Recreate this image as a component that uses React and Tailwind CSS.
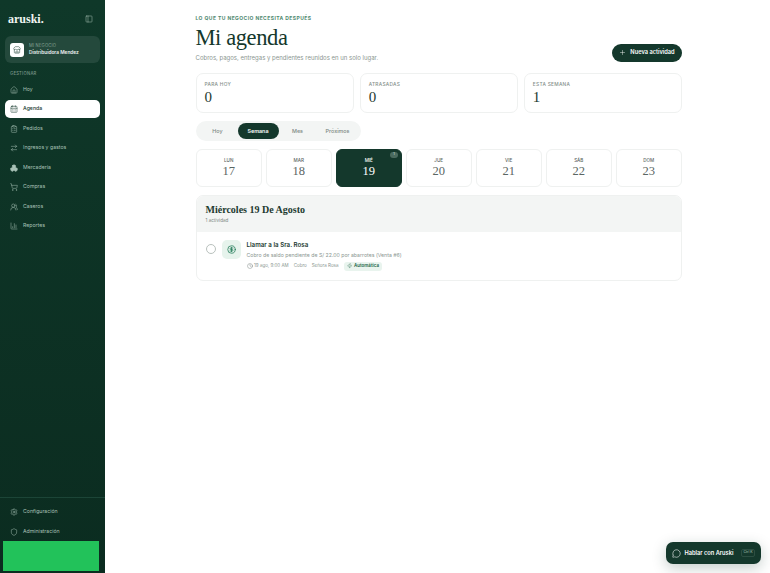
import { CalendarDays, ClipboardList, ArrowRightLeft, ShoppingCart, UsersRound, ChartColumn, Settings, Shield, PanelLeft, Plus, CircleDollarSign, Clock, MessageCircle, House, Store, Boxes, Zap } from "lucide-react";

const serif = "font-['Liberation_Serif',serif]";

const navItems = [
  { label: "Hoy", icon: House },
  { label: "Agenda", icon: CalendarDays, active: true },
  { label: "Pedidos", icon: ClipboardList },
  { label: "Ingresos y gastos", icon: ArrowRightLeft },
  { label: "Mercadería", icon: Boxes, filled: true },
  { label: "Compras", icon: ShoppingCart },
  { label: "Caseros", icon: UsersRound },
  { label: "Reportes", icon: ChartColumn },
];

const stats = [
  { label: "PARA HOY", value: "0" },
  { label: "ATRASADAS", value: "0" },
  { label: "ESTA SEMANA", value: "1" },
];

const days = [
  { name: "LUN", num: "17" },
  { name: "MAR", num: "18" },
  { name: "MIÉ", num: "19", active: true },
  { name: "JUE", num: "20" },
  { name: "VIE", num: "21" },
  { name: "SÁB", num: "22" },
  { name: "DOM", num: "23" },
];

function NavRow({ item }) {
  const Icon = item.icon;
  return (
    <div className={`flex h-[18.5px] items-center gap-[5.5px] rounded-[5px] pl-[4.5px] text-[5.2px] ${item.active ? "bg-white font-medium text-[#14382c]" : "font-normal text-[#a9c2b7]"}`}>
      <Icon className="h-[8px] w-[8px]" strokeWidth={1.5} fill={item.filled ? "currentColor" : "none"} />
      <span>{item.label}</span>
    </div>
  );
}

function Sidebar() {
  return (
    <aside className="flex h-[573px] w-[105px] shrink-0 flex-col bg-gradient-to-b from-[#0f3829] to-[#0b2c20] pb-[2px]">
      <div className="flex h-[36px] items-center justify-between pl-[8px] pr-[12px] pt-[1px]">
        <span className={`${serif} text-[12px] font-bold leading-none text-[#f1f5f2]`}>aruski.</span>
        <PanelLeft className="h-[8px] w-[8px] text-[#a9c2b7]" strokeWidth={1.5} />
      </div>
      <div className="mx-[5px] flex h-[27px] items-center gap-[5px] rounded-[6px] bg-[#24493c] px-[5px]">
        <div className="flex h-[14px] w-[14px] items-center justify-center rounded-[3px] bg-white">
          <Store className="h-[8px] w-[8px] text-[#14382c]" strokeWidth={1.5} />
        </div>
        <div className="flex flex-col leading-none">
          <span className="text-[4.2px] tracking-[0.04em] text-[#86a396]">MI NEGOCIO</span>
          <span className="mt-[2px] text-[4.8px] font-semibold text-[#eef3f0]">Distribuidora Mendez</span>
        </div>
      </div>
      <div className="mb-[3.5px] ml-[10px] mt-[7.5px] text-[4.2px] font-medium tracking-[0.06em] text-[#7b978b]">GESTIONAR</div>
      <nav className="flex flex-col gap-[1px] px-[5px]">
        {navItems.map((item) => (
          <NavRow key={item.label} item={item} />
        ))}
      </nav>
      <div className="mt-auto border-t border-[#1c4537] px-[5px] pt-[4.5px]">
        <NavRow item={{ label: "Configuración", icon: Settings }} />
        <div className="mt-[1.5px]">
          <NavRow item={{ label: "Administración", icon: Shield }} />
        </div>
      </div>
      <div className="ml-[3px] h-[30px] w-[96px] bg-[#22c25a]" />
    </aside>
  );
}

function Main() {
  return (
    <main className="flex-1 bg-white pl-[90.5px] pt-[15px]">
      <div className="w-[486.5px]">
        <div className="flex items-end justify-between">
          <div>
            <div className="text-[5px] font-bold leading-[7px] tracking-[0.085em] text-[#4f8a70]">LO QUE TU NEGOCIO NECESITA DESPUÉS</div>
            <h1 className={`${serif} mt-[2px] text-[22.5px] font-normal leading-[28px] tracking-[-0.4px] text-[#14382c]`}>Mi agenda</h1>
            <p className="mt-[1px] text-[6px] leading-[10px] text-[#8b9691]">Cobros, pagos, entregas y pendientes reunidos en un solo lugar.</p>
          </div>
          <button className="mb-[1.5px] flex h-[18px] w-[70px] items-center justify-center gap-[4px] rounded-full bg-[#14382c] text-[5.7px] font-semibold text-white">
            <Plus className="h-[7px] w-[7px]" strokeWidth={1.5} />
            Nueva actividad
          </button>
        </div>

        <div className="mt-[10px] grid grid-cols-3 gap-[6px]">
          {stats.map((s) => (
            <div key={s.label} className="h-[40px] rounded-[7px] border border-[#eff1f0] px-[8px] pt-[7px]">
              <div className="text-[4.8px] font-medium leading-[6px] tracking-[0.06em] text-[#858f8b]">{s.label}</div>
              <div className={`${serif} mt-[2px] text-[15px] leading-[17px] text-[#1d3a30]`}>{s.value}</div>
            </div>
          ))}
        </div>

        <div className="mt-[8px] flex h-[20px] w-[165px] items-center rounded-full bg-[#f3f5f4] pl-[2px] text-[5.4px] font-medium text-[#7c8783]">
          <span className="w-[40px] text-center">Hoy</span>
          <span className="flex h-[15.5px] w-[41px] items-center justify-center rounded-full bg-[#14382c] font-semibold text-white">Semana</span>
          <span className="w-[38px] text-center">Mes</span>
          <span className="w-[42px] text-center">Próximos</span>
        </div>

        <div className="mt-[8px] grid grid-cols-7 gap-[3.5px]">
          {days.map((d) => (
            <div key={d.name} className={`relative flex h-[38px] flex-col items-center justify-center rounded-[6px] border ${d.active ? "border-[#14382c] bg-[#14382c] text-white" : "border-[#eff1f0] text-[#5b6663]"}`}>
              <span className="text-[4.6px] font-medium leading-[6px]">{d.name}</span>
              <span className={`${serif} text-[12.5px] leading-[14px]`}>{d.num}</span>
              {d.active && (
                <span className="absolute right-[3px] top-[2px] flex h-[6px] w-[8px] items-center justify-center rounded-full bg-[#4a6a5e] text-[3.6px] leading-none text-[#dfe8e4]">1</span>
              )}
            </div>
          ))}
        </div>

        <section className="mt-[8px] overflow-hidden rounded-[7px] border border-[#eff1f0]">
          <div className="h-[36px] bg-[#f3f5f4] px-[9px] pt-[8px]">
            <h2 className={`${serif} text-[10px] font-bold leading-[12px] text-[#1d3a30]`}>Miércoles 19 De Agosto</h2>
            <div className="mt-[2px] text-[4.6px] leading-[6px] text-[#7c8783]">1 actividad</div>
          </div>
          <div className="flex h-[48px] items-start pl-[9px] pt-[8px]">
            <span className="mt-[4px] h-[10px] w-[10px] rounded-full border border-[#b9c1bd]" />
            <span className="ml-[6px] flex h-[19px] w-[19px] items-center justify-center rounded-[5px] bg-[#e6f3ec]">
              <CircleDollarSign className="h-[9px] w-[9px] text-[#1f7a55]" strokeWidth={2} />
            </span>
            <div className="ml-[6px]">
              <div className="text-[6.2px] font-semibold leading-[9px] text-[#1d3a30]">Llamar a la Sra. Rosa</div>
              <div className="mt-[2px] text-[5.2px] leading-[8px] text-[#8b9691]">Cobro de saldo pendiente de S/ 22.00 por abarrotes (Venta #6)</div>
              <div className="mt-[2.5px] flex items-center gap-[5px] text-[4.5px] leading-[8px] text-[#8b9691]">
                <span className="flex items-center gap-[1.5px]">
                  <Clock className="h-[6px] w-[6px] text-[#5d6a65]" strokeWidth={1.5} />
                  19 ago, 9:00 AM
                </span>
                <span>Cobro</span>
                <span>Señora Rosa</span>
                <span className="flex h-[9px] items-center gap-[2px] rounded-[3px] bg-[#e9f4ee] px-[3px] font-semibold text-[#24664a]">
                  <Zap className="h-[5.5px] w-[5.5px]" strokeWidth={1.5} />
                  Automática
                </span>
              </div>
            </div>
          </div>
        </section>
      </div>
    </main>
  );
}

export default function App() {
  return (
    <div className="relative flex h-[573px] w-[770px] overflow-hidden bg-white font-['Inter',sans-serif]">
      <Sidebar />
      <Main />
      <div className="absolute bottom-[9px] right-[9px] flex h-[22px] w-[95px] items-center gap-[3.5px] rounded-[7px] bg-[#14382c] pl-[6px] shadow-[0_4px_14px_rgba(20,56,44,0.25)]">
        <MessageCircle className="h-[9px] w-[9px] text-white" strokeWidth={1.5} />
        <span className="text-[5.7px] font-semibold text-white">Hablar con Aruski</span>
        <span className="ml-[4px] rounded-[2px] border border-[#2c4e42] px-[1.5px] text-[3.5px] leading-[5.5px] text-[#a9c2b7]">Ctrl K</span>
      </div>
    </div>
  );
}
